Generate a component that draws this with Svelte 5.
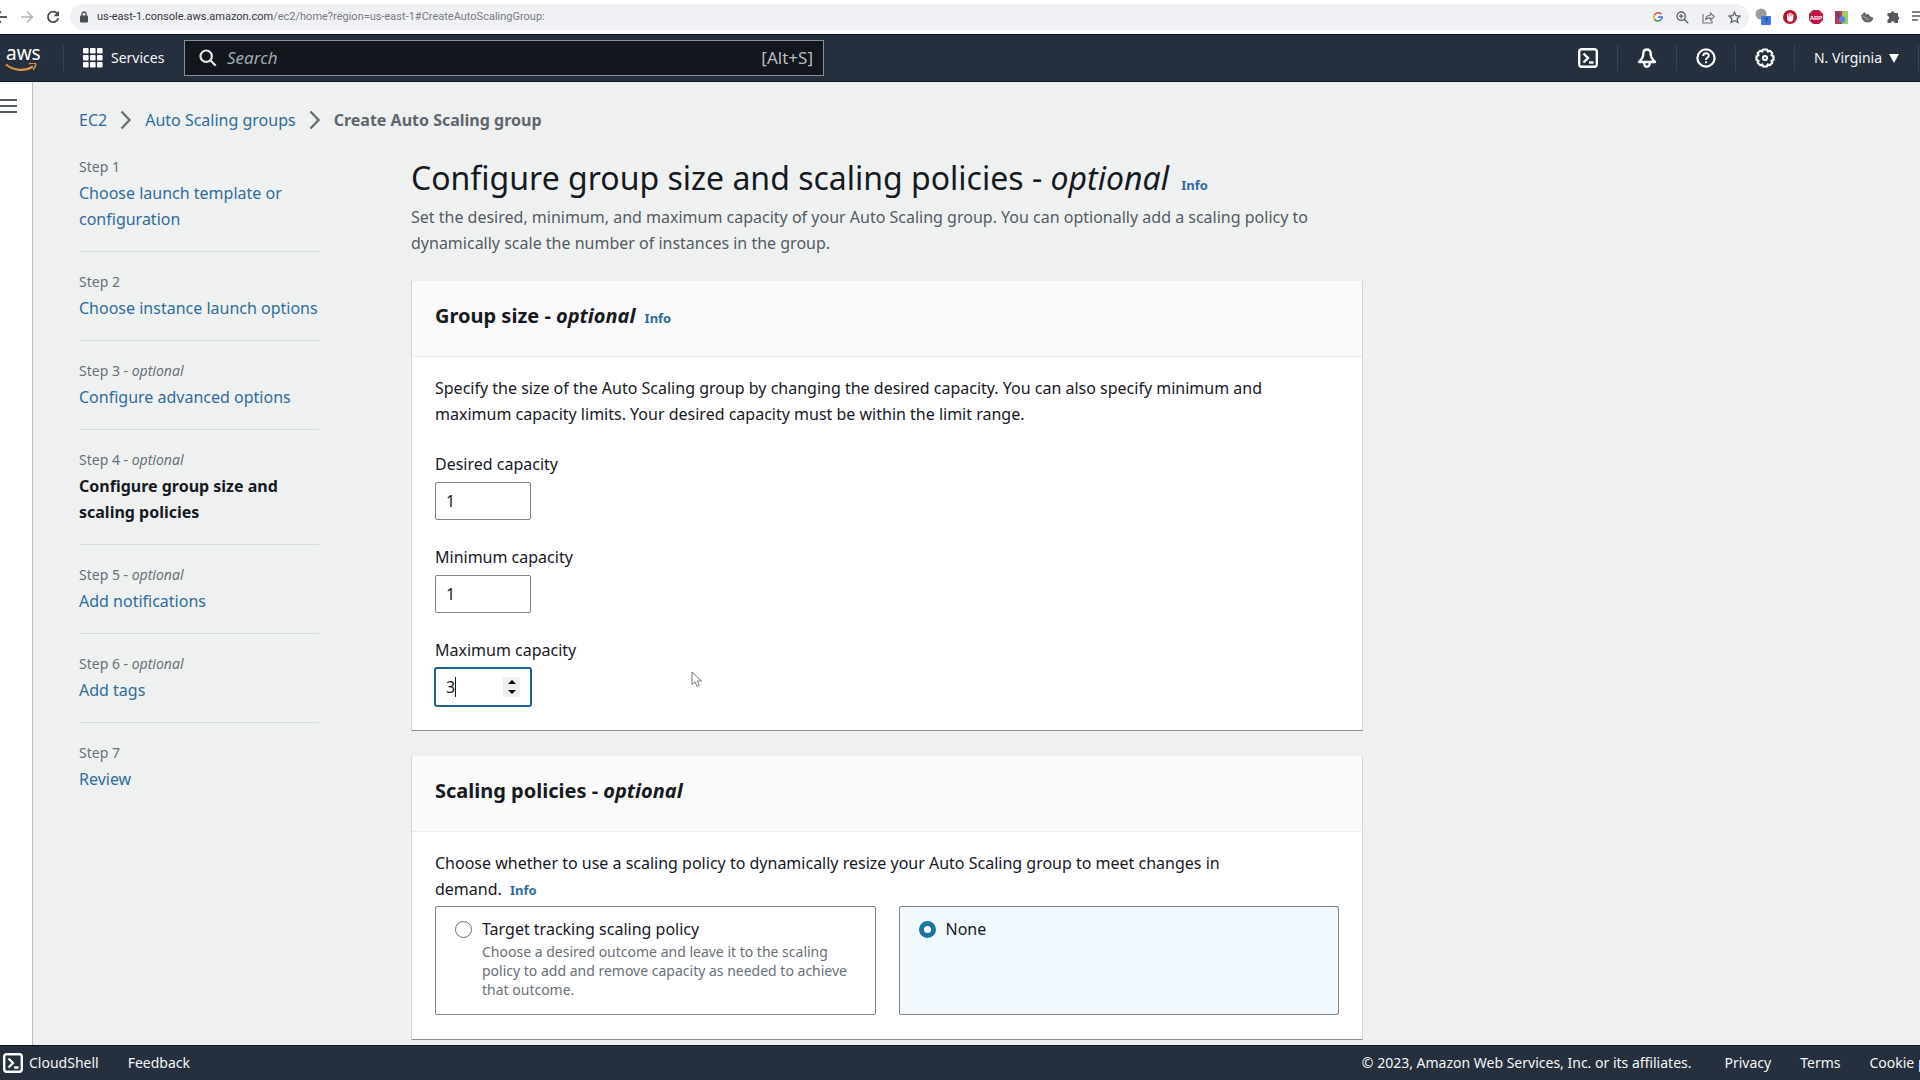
<script>
  let policy = $state("none");
  let capacities = $state([
    { id: "desired", label: "Desired capacity", value: 1 },
    { id: "minimum", label: "Minimum capacity", value: 1 },
    { id: "maximum", label: "Maximum capacity", value: 3, active: true },
  ]);

  const steps = [
    { title: "Choose launch template or configuration" },
    { title: "Choose instance launch options" },
    { title: "Configure advanced options", optional: true },
    { title: "Configure group size and scaling policies", optional: true, current: true },
    { title: "Add notifications", optional: true },
    { title: "Add tags", optional: true },
    { title: "Review" },
  ];
</script>

{#snippet terminal()}
  <svg width="20" height="20" viewBox="0 0 20 20" fill="none" stroke="#fff" stroke-width="2.4">
    <rect x="1.2" y="1.2" width="17.6" height="17.6" rx="2.5" />
    <path d="M5.5 5.5l4.5 4.5-4.5 4.5M11 14.5h4.5" />
  </svg>
{/snippet}

{#snippet chevron()}
  <svg width="12" height="20" viewBox="0 0 12 20" fill="none" stroke="#687078" stroke-width="2.4">
    <path d="M1.5 1.5l8 8.5-8 8.5" />
  </svg>
{/snippet}

<div class="page">
  <div class="browser">
    <div class="nav">
      <button aria-label="Back">
        <svg width="14" height="14" viewBox="0 0 14 14" fill="none" stroke="#55585c" stroke-width="1.8"><path d="M13 7H1.5M7 1.5L1.5 7 7 12.5" /></svg>
      </button>
      <button aria-label="Forward">
        <svg width="14" height="14" viewBox="0 0 14 14" fill="none" stroke="#b4b6b9" stroke-width="1.6"><path d="M1 7h11.5M7 1.5L12.5 7 7 12.5" /></svg>
      </button>
      <button aria-label="Reload">
        <svg width="14" height="14" viewBox="0 0 14 14"><path d="M11.5 4A5.2 5.2 0 1 0 12.2 8.2" fill="none" stroke="#4a4d51" stroke-width="1.8" /><path d="M13 .8v5.4H7.6z" fill="#4a4d51" /></svg>
      </button>
    </div>
    <div class="address">
      <svg width="8" height="12" viewBox="0 0 8 12"><rect y="4.5" width="8" height="7" rx="1" fill="#4a4d51" /><path d="M2 5V3a2 2 0 0 1 4 0v2" fill="none" stroke="#4a4d51" stroke-width="1.3" /></svg>
      <span class="url"><b>us-east-1.console.aws.amazon.com</b>/ec2/home?region=us-east-1#CreateAutoScalingGroup:</span>
      <svg width="10" height="10" viewBox="0 0 10 10" fill="none" stroke-width="1.7">
        <path d="M8.3 2.2A4.1 4.1 0 0 0 1.5 3" stroke="#dd5a4c" /><path d="M1.5 3a4.1 4.1 0 0 0 0 4.2" stroke="#e6b43c" />
        <path d="M1.5 7.2a4.1 4.1 0 0 0 6 1" stroke="#4b9e63" /><path d="M5 5.1h4.1a4.1 4.1 0 0 1-1.6 3.1" stroke="#4c7fd0" />
      </svg>
      <svg width="13" height="13" viewBox="0 0 13 13" fill="none" stroke="#5f6368" stroke-width="1.3"><circle cx="5.2" cy="5.2" r="4.2" /><path d="M8.2 8.2l4 4M3 5.2h4.4M5.2 3v4.4" /></svg>
      <svg width="13" height="13" viewBox="0 0 13 13" fill="none" stroke="#77797d" stroke-width="1.2"><path d="M2 4H1v8h9V9.5M3.5 9c.3-3 2-4.6 5-4.8V2l3.7 3.5L8.5 9V6.8C6 6.8 4.6 7.4 3.5 9z" /></svg>
      <svg width="13" height="13" viewBox="0 0 13 13" fill="none" stroke="#5f6368" stroke-width="1.3"><path d="M6.5 1.2l1.6 3.5 3.8.4-2.8 2.6.8 3.8-3.4-2-3.4 2 .8-3.8L1.1 5.1l3.8-.4z" /></svg>
    </div>
    <div class="extensions">
      <svg width="16" height="18" viewBox="0 0 16 18"><circle cx="6" cy="6" r="5.5" fill="#9a9da1" /><rect x="6" y="8" width="10" height="9" rx="1" fill="#3f78d8" /><path d="M9.5 10.5h3l-1.5 4" stroke="#243f78" fill="none" /></svg>
      <svg width="14" height="14" viewBox="0 0 14 14"><circle cx="7" cy="7" r="7" fill="#b8112b" /><path d="M4.5 7V4.5M6.2 6.5V3M8 6.5V3.3M9.7 7V4.5" stroke="#fff" stroke-width="1.2" stroke-linecap="round" /><path d="M4 6.5h6.3v2a3 3 0 0 1-6.3 0z" fill="#fff" /></svg>
      <svg width="14" height="14" viewBox="0 0 14 14"><path d="M4 0h6l4 4v6l-4 4H4l-4-4V4z" fill="#c01442" /><text x="7" y="9.5" text-anchor="middle" class="abp">ABP</text></svg>
      <svg width="13" height="13" viewBox="0 0 13 13"><path d="M0 0h7v13H0z" fill="#b93a50" /><path d="M7 0h6v13H7z" fill="#9ccf6c" /><path d="M2 2l4 9" stroke="#44506b" stroke-width="2" /><circle cx="7" cy="8.5" r="3.3" fill="#5b82d4" /></svg>
      <svg width="14" height="14" viewBox="0 0 14 14" fill="#66696d"><path d="M1 5.5L4.5 2l2 2.5 2-.8L10 6.2l3.3 1.5c-.7 3.5-3 5-6 4.8C4 12.3 2 10 1 5.5z" /><path d="M3 6l6 4" stroke="#aaa" /></svg>
      <svg width="14" height="14" viewBox="0 0 14 14" fill="#55585c"><path d="M5 3a1.7 1.7 0 0 1 3.4 0H12v3.5a1.7 1.7 0 0 1 0 3.3V13H8.5a1.7 1.7 0 0 0-3.4 0H1.5V9.5a1.7 1.7 0 0 0 0-3.4V3z" /></svg>
      <svg width="14" height="12" viewBox="0 0 14 12" fill="none" stroke="#55585c" stroke-width="1.5"><path d="M0 1h11M0 5h11M0 9h6M11 5v6" /></svg>
    </div>
  </div>

  <header>
    <a class="logo" href="#home" aria-label="AWS home">
      <span>aws</span>
      <svg width="32" height="10" viewBox="0 0 32 10"><path d="M1 1.5c8 6.5 19 7 27 2" fill="none" stroke="#dc9148" stroke-width="2.2" /><path d="M24 .9c3-.9 6-.8 6.5-.2.5.7-.3 4-2.5 6" fill="none" stroke="#dc9148" stroke-width="1.5" /></svg>
    </a>
    <button class="services">
      <svg width="20" height="20" viewBox="0 0 20 20" fill="#fff">
        {#each [0, 7, 14] as y}
          {#each [0, 7, 14] as x}
            <rect {x} {y} width="5.6" height="5.6" rx="1" />
          {/each}
        {/each}
      </svg>
      Services
    </button>
    <div class="search">
      <svg width="18" height="18" viewBox="0 0 18 18" fill="none" stroke="#e3e5e7" stroke-width="2.2"><circle cx="7.2" cy="7.2" r="5.7" /><path d="M11.3 11.3l5.4 5.4" /></svg>
      <input type="search" placeholder="Search" aria-label="Search" />
      <kbd>[Alt+S]</kbd>
    </div>
    <div class="tools">
      <button aria-label="CloudShell">{@render terminal()}</button>
      <button aria-label="Notifications">
        <svg width="20" height="20" viewBox="0 0 20 20" fill="none" stroke="#fff" stroke-width="2.4"><path d="M10 1.5c-2.2 0-3.7 1.5-3.7 4 0 4-1.5 6-4.3 8.5h16c-2.8-2.5-4.3-4.5-4.3-8.5 0-2.5-1.5-4-3.7-4z" stroke-linejoin="round" /><path d="M7.2 15c0 5 5.6 5 5.6 0" /></svg>
      </button>
      <button aria-label="Help">
        <svg width="20" height="20" viewBox="0 0 20 20" fill="none" stroke="#fff" stroke-width="2.2"><circle cx="10" cy="10" r="8.6" /><path d="M7.2 8c0-3.8 5.8-3.6 5.6-.3-.1 1.8-2.8 1.9-2.8 4.3M10 13.3v2" stroke-width="1.9" /></svg>
      </button>
      <button aria-label="Settings">
        <svg width="20" height="20" viewBox="0 0 20 20" fill="none" stroke="#fff" stroke-width="2.2"><path d="M8 1.5h4l.8 2 2.1-.7 2.4 2.5-.8 2 2 .9v3.7l-2 .9.8 2-2.5 2.5-2-.8-.9 2H8.1l-.9-2-2 .8-2.5-2.5.8-2-2-.9V8.2l2-.9-.8-2 2.5-2.5 2 .7z" stroke-linejoin="round" /><circle cx="10" cy="10" r="2" /></svg>
      </button>
      <button class="region">N. Virginia <svg width="10" height="9" viewBox="0 0 10 9"><path d="M0 0h10L5 9z" fill="#fff" /></svg></button>
    </div>
  </header>

  <div class="body">
    <div class="rail">
      <button aria-label="Open navigation">
        <svg width="17" height="16" viewBox="0 0 17 16" stroke="#545b64" stroke-width="2"><path d="M0 2h17M0 8h17M0 14h17" /></svg>
      </button>
    </div>
    <div class="content">
      <nav class="crumbs" aria-label="Breadcrumbs">
        <a href="#ec2">EC2</a>
        {@render chevron()}
        <a href="#groups">Auto Scaling groups</a>
        {@render chevron()}
        <strong>Create Auto Scaling group</strong>
      </nav>

      <div class="columns">
        <ol class="steps">
          {#each steps as step, i}
            <li>
              <small>Step {i + 1}{#if step.optional}{" "}- <i>optional</i>{/if}</small>
              {#if step.current}
                <strong>{step.title}</strong>
              {:else}
                <a href="#step-{i + 1}">{step.title}</a>
              {/if}
            </li>
          {/each}
        </ol>

        <main>
          <h1>Configure group size and scaling policies - <i>optional</i> <a class="info" href="#info">Info</a></h1>
          <p class="intro">
            Set the desired, minimum, and maximum capacity of your Auto Scaling group. You can optionally add a scaling policy to
            dynamically scale the number of instances in the group.
          </p>

          <section>
            <h2>Group size - <i>optional</i> <a class="info" href="#group-info">Info</a></h2>
            <div class="inner">
              <p>
                Specify the size of the Auto Scaling group by changing the desired capacity. You can also specify minimum and
                maximum capacity limits. Your desired capacity must be within the limit range.
              </p>
              {#each capacities as field}
                <div class="field">
                  <label for={field.id}>{field.label}</label>
                  <div class="number" class:active={field.active}>
                    <input id={field.id} type="number" bind:value={field.value} />
                    {#if field.active}
                      <span class="caret"></span>
                      <div class="spinner">
                        <button aria-label="Increase" onclick={() => field.value++}><svg width="8" height="4" viewBox="0 0 8 4"><path d="M0 4l4-4 4 4z" /></svg></button>
                        <button aria-label="Decrease" onclick={() => field.value--}><svg width="8" height="4" viewBox="0 0 8 4"><path d="M0 0l4 4 4-4z" /></svg></button>
                      </div>
                    {/if}
                  </div>
                </div>
              {/each}
            </div>
          </section>

          <section>
            <h2>Scaling policies - <i>optional</i></h2>
            <div class="inner">
              <p>
                Choose whether to use a scaling policy to dynamically resize your Auto Scaling group to meet changes in
                demand. <a class="info" href="#policy-info">Info</a>
              </p>
              <div class="tiles">
                <label class="tile" class:selected={policy === "target"}>
                  <input type="radio" name="policy" value="target" bind:group={policy} />
                  <span>
                    Target tracking scaling policy
                    <small>Choose a desired outcome and leave it to the scaling policy to add and remove capacity as needed to achieve that outcome.</small>
                  </span>
                </label>
                <label class="tile" class:selected={policy === "none"}>
                  <input type="radio" name="policy" value="none" bind:group={policy} />
                  <span>None</span>
                </label>
              </div>
            </div>
          </section>
        </main>
      </div>
    </div>
  </div>

  <footer>
    <button>{@render terminal()} CloudShell</button>
    <a href="#feedback">Feedback</a>
    <span class="copyright">© 2023, Amazon Web Services, Inc. or its affiliates.</span>
    <a href="#privacy">Privacy</a>
    <a href="#terms">Terms</a>
    <a href="#cookies">Cookie preferences</a>
  </footer>

  <svg class="pointer" width="12" height="17" viewBox="0 0 12 17"><path d="M1 1v12.5l3-2.7 2 4.7 2.3-1-2-4.5h4.2z" fill="#fff" stroke="#77797d" /></svg>
</div>

<style>
  .page {
    position: relative;
    display: flex;
    flex-direction: column;
    height: 100vh;
    overflow: hidden;
    font: 16px/26px "Noto Sans", "Open Sans", sans-serif;
    color: #16191f;
    background: #eff1f1;
  }

  .page * {
    box-sizing: border-box;
  }

  svg {
    display: block;
    flex: none;
  }

  a {
    color: #2f6c9b;
    text-decoration: none;
  }

  button {
    display: flex;
    align-items: center;
    padding: 0;
    border: 0;
    background: none;
    color: inherit;
    font: inherit;
    cursor: pointer;
  }

  input {
    font: inherit;
    color: inherit;
  }

  .browser {
    display: flex;
    align-items: center;
    flex: none;
    height: 34px;
    background: #fff;
  }

  .nav {
    display: flex;
    gap: 12px;
    width: 76px;
    margin-left: -6px;
  }

  .address {
    display: flex;
    align-items: center;
    flex: 1;
    gap: 13px;
    height: 26px;
    padding: 0 8px 0 10px;
    border-radius: 13px;
    background: #f0f1f4;
  }

  .url {
    flex: 1;
    margin-left: -4px;
    font: 11px/16px Roboto, "Open Sans", sans-serif;
    color: #777a7e;
  }

  .url b {
    font-weight: 400;
    color: #35373b;
  }

  .extensions {
    display: flex;
    align-items: center;
    gap: 12px;
    margin: 0 -6px 0 6px;
  }

  .abp {
    font: bold 6px "Liberation Sans", sans-serif;
    fill: #fff;
  }

  header {
    display: flex;
    align-items: center;
    flex: none;
    height: 48px;
    background: #252f3e;
    border-top: 1px solid #10161f;
    border-bottom: 1px solid #10161f;
    color: #f5f6f7;
    font-size: 14px;
  }

  .logo {
    width: 64px;
    height: 26px;
    padding-left: 5px;
    border-right: 1px solid #39424f;
    color: #fff;
  }

  .logo span {
    display: block;
    height: 18px;
    padding-left: 1px;
    font-size: 19px;
    line-height: 16px;
  }

  .services {
    gap: 8px;
    width: 120px;
    padding-left: 19px;
  }

  .search {
    display: flex;
    align-items: center;
    flex: 0 1 640px;
    height: 36px;
    padding: 0 10px 0 14px;
    gap: 10px;
    border: 1px solid #87919c;
    background: #12161d;
  }

  .search input {
    flex: 1;
    padding: 0;
    border: 0;
    outline: 0;
    background: none;
    font-size: 17px;
  }

  .search input::placeholder {
    color: #a3a9ae;
    font-style: italic;
  }

  kbd {
    color: #b8bdc1;
    font: 17px/24px "Noto Sans", sans-serif;
  }

  .tools {
    display: flex;
    align-items: center;
    margin-left: auto;
  }

  .tools button {
    justify-content: center;
    width: 59px;
    height: 26px;
    border-right: 1px solid #39424f;
  }

  .tools .region {
    width: 124px;
    gap: 7px;
    margin-right: 1px;
  }

  .body {
    display: flex;
    flex: 1;
    min-height: 0;
  }

  .rail {
    width: 33px;
    padding-top: 16px;
    background: #fff;
    border-right: 1px solid #babfc1;
  }

  .content {
    flex: 1;
    padding: 25px 46px;
    overflow: hidden;
  }

  .crumbs {
    display: flex;
    align-items: center;
    gap: 13px;
    height: 26px;
  }

  .crumbs strong {
    color: #5f666d;
  }

  .columns {
    display: flex;
    gap: 92px;
    margin-top: 20px;
  }

  .steps {
    flex: none;
    width: 240px;
    margin: 0;
    padding: 0;
    list-style: none;
  }

  li {
    margin-bottom: 16px;
    padding-bottom: 19px;
    border-bottom: 1px solid #d5dbdb;
  }

  li:last-child {
    border: 0;
  }

  li small,
  li a,
  li strong {
    display: block;
  }

  small {
    color: #687078;
    font-size: 14px;
    line-height: 27px;
  }

  main {
    flex: 0 1 952px;
  }

  h1 {
    margin: 7px 0 8px;
    font-size: 32px;
    font-weight: 400;
    line-height: 36px;
  }

  .info {
    margin-left: 4px;
    font-size: 13px;
    font-weight: 700;
    font-style: normal;
    line-height: 16px;
  }

  p {
    margin: 0;
  }

  .intro {
    color: #545b64;
  }

  section {
    margin-top: 24px;
    background: #fff;
    border: 1px solid #d3d7d8;
    border-top-color: #eaeded;
    border-bottom-color: #8d9192;
  }

  h2 {
    margin: 0;
    padding: 22px 23px 27px;
    border-bottom: 1px solid #eaeded;
    background: #fafafa;
    font-size: 20px;
    line-height: 26px;
  }

  .inner {
    padding: 18px 23px 24px;
  }

  .inner p {
    max-width: 848px;
  }

  .field {
    margin-top: 24px;
  }

  .field label {
    display: block;
    margin-bottom: 5px;
  }

  .number {
    position: relative;
    width: 96px;
  }

  .number input {
    display: block;
    width: 100%;
    height: 38px;
    padding: 0 10px;
    border: 1px solid #7d8489;
    border-radius: 2px;
    outline: 0;
    background: #fff;
    appearance: textfield;
  }

  .number input::-webkit-inner-spin-button {
    display: none;
  }

  .active input {
    border-color: #17689f;
    box-shadow: 0 0 0 1px #285b83;
  }

  .caret {
    position: absolute;
    top: 9px;
    left: 20px;
    width: 1px;
    height: 20px;
    background: #16191f;
  }

  .spinner {
    position: absolute;
    top: 9px;
    right: 11px;
    display: grid;
    width: 17px;
    height: 20px;
    background: #efefef;
  }

  .spinner button {
    justify-content: center;
  }

  .tiles {
    display: grid;
    grid-template-columns: 1fr 1fr;
    gap: 23px;
    margin-top: 4px;
  }

  .tile {
    display: flex;
    gap: 10px;
    padding: 9px 22px 15px 19px;
    border: 1px solid #7d8489;
    border-radius: 2px;
  }

  .tile small {
    display: block;
    line-height: 19px;
  }

  .tile.selected {
    background: #f1f9ff;
  }

  .tile input {
    flex: none;
    appearance: none;
    width: 17px;
    height: 17px;
    margin: 5px 0;
    border: 1px solid #687078;
    border-radius: 50%;
    background: #fff;
  }

  .tile input:checked {
    border: 5px solid #1a74a4;
  }

  footer {
    display: flex;
    align-items: center;
    flex: none;
    gap: 29px;
    height: 35px;
    margin-right: -76px;
    padding-left: 3px;
    background: #252f3e;
    border-top: 1px solid #10161f;
    color: #f5f6f7;
    font-size: 14px;
    white-space: nowrap;
  }

  footer a {
    color: inherit;
  }

  footer button {
    gap: 6px;
  }

  .copyright {
    margin: 0 4px 0 auto;
  }

  .pointer {
    position: absolute;
    top: 671px;
    left: 691px;
  }
</style>
